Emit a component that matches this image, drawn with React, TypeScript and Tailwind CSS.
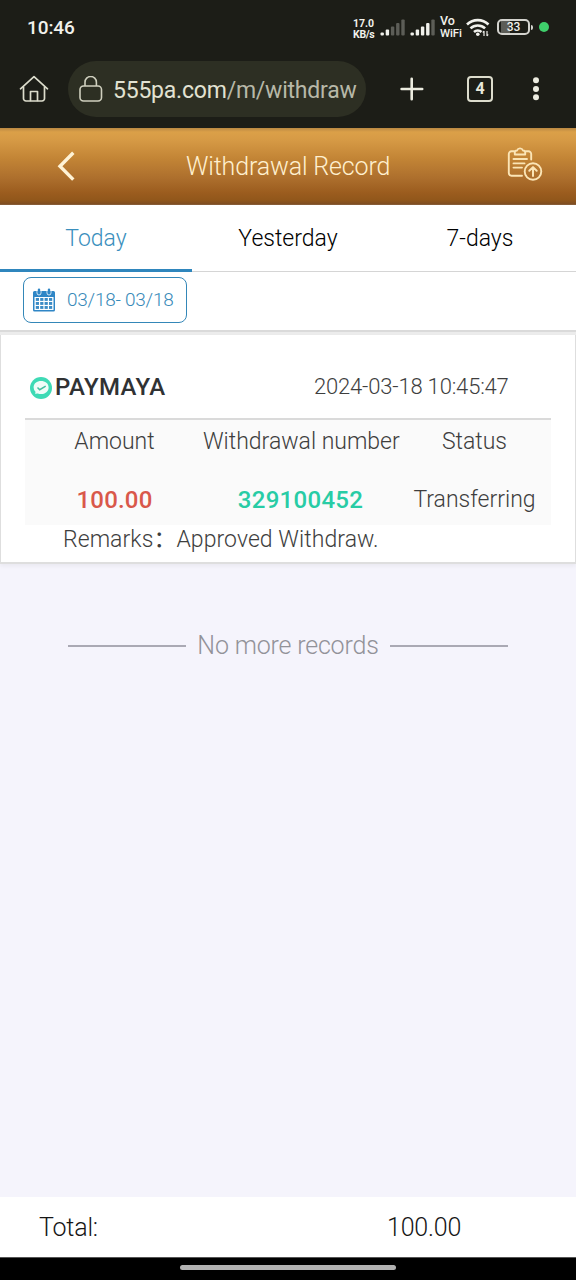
import React from "react";

function Signal({ lit }: { lit: number }) {
  const heights = [3, 6, 9, 12.5, 16];
  return (
    <svg width="26" height="17" viewBox="0 0 26 17" className="shrink-0">
      {heights.map((h, i) => (
        <rect key={i} x={0.5 + i * 5.2} y={16.5 - h} width="3.4" height={h} rx="1" fill={i < lit ? "#f1f1ec" : "#5c5d57"} />
      ))}
    </svg>
  );
}

function StatusBar() {
  return (
    <div className="flex h-[50px] items-start pl-[27px] text-[#f1f1ec]">
      <span className="mt-[16px] w-[326px] text-[19px] leading-6 font-medium tracking-[-0.1px]">10:46</span>
      <div className="mt-[18px] w-[27px] text-[10.5px] leading-[11px] font-bold whitespace-nowrap">
        <div>17.0</div>
        <div className="tracking-[-0.3px]">KB/s</div>
      </div>
      <div className="mt-[19px] flex h-[17px]">
        <Signal lit={2} />
        <div className="w-[4px]" />
        <Signal lit={4} />
      </div>
      <div className="mt-[15px] ml-[4px] w-[26px] text-[11.5px] leading-[12px] font-medium whitespace-nowrap">
        <div className="text-[12.5px]">Vo</div>
        <div className="tracking-[-0.1px]">WiFi</div>
      </div>
      <svg width="24" height="19" viewBox="0 0 24 19" className="mt-[18px] shrink-0" fill="none" stroke="#f1f1ec" strokeWidth="2.6">
        <path d="M1 6.5a15.5 15.5 0 0 1 21.5 0" />
        <path d="M4.5 10.4a10.6 10.6 0 0 1 14.6 0" />
        <path d="M8 14a5.6 5.6 0 0 1 7.5 0" />
        <circle cx="11.8" cy="16.2" r="1.8" fill="#f1f1ec" stroke="none" />
        <path d="M18 18v-5M16.8 14.5 18 13M21 13v5M22.2 16.5 21 18" strokeWidth="1.2" />
      </svg>
      <div className="mt-[19px] ml-[7px] flex items-center">
        <div className="flex h-[16px] w-[33px] items-center justify-center rounded-[5px] border-2 border-[#d3d3ce] bg-[linear-gradient(90deg,transparent_2px,#5c5d57_2px,#5c5d57_11px,transparent_11px)] text-[12px] leading-3 font-medium">33</div>
        <div className="ml-[1px] h-[5px] w-[2px] rounded-r bg-[#d3d3ce]" />
      </div>
      <div className="mt-[22px] ml-[6px] h-[10px] w-[10px] rounded-full bg-[#3fcf6b]" />
    </div>
  );
}

function BrowserBar() {
  return (
    <div className="flex h-[78px] items-start pl-[19px]">
      <svg width="30" height="28" viewBox="0 0 30 28" className="mt-[25px] shrink-0" fill="none" stroke="#dcdccc" strokeWidth="1.7" strokeLinejoin="round" strokeLinecap="round">
        <path d="M1.5 13.8 15 1.6 28.5 13.8" />
        <path d="M4.5 12v11.5a2.5 2.5 0 0 0 2.5 2.5h16a2.5 2.5 0 0 0 2.5-2.5V12" />
        <path d="M11.5 25.5v-9h7v9" />
      </svg>
      <div className="mt-[11px] ml-[19px] flex h-[56px] w-[298px] items-center rounded-full bg-[#2d2f23] pl-[11px]">
        <svg width="24" height="26" viewBox="0 0 24 26" className="shrink-0" fill="none" stroke="#cfcfbe" strokeWidth="1.6">
          <rect x="1" y="10" width="21.5" height="15" rx="3.5" />
          <path d="M6 10V6.2a5.6 5.6 0 0 1 11.4 0V10" />
        </svg>
        <div className="mt-[3px] ml-[10px] w-[246px] text-[23px] leading-8 tracking-[-0.22px] whitespace-nowrap text-[#e2e2d2]">
          <span>555pa.com</span>
          <span className="text-[#b7b8a8]">/m/withdraw</span>
        </div>
      </div>
      <svg width="24" height="24" viewBox="0 0 24 24" className="mt-[27px] ml-[34px] shrink-0" fill="none" stroke="#ecece0" strokeWidth="2.6" strokeLinecap="round">
        <path d="M11.7 1.7v20.6M1.6 12h20.6" />
      </svg>
      <div className="mt-[26px] ml-[43px] flex h-[26px] w-[26px] items-center justify-center rounded-[4px] border-2 border-[#dcdccc] text-[16px] font-bold text-[#e8e8da]">4</div>
      <svg width="8" height="26" viewBox="0 0 8 26" className="mt-[26px] ml-[39px] shrink-0" fill="#ecece0">
        <circle cx="4" cy="4.3" r="3" />
        <circle cx="4" cy="12.9" r="3" />
        <circle cx="4" cy="21.3" r="3" />
      </svg>
    </div>
  );
}

function Header() {
  return (
    <div className="flex h-[77px] items-start bg-[linear-gradient(180deg,#b98843_0px,#dba048_4px,#d69a45_12px,#c38536_30px,#ad6f2d_50px,#9b5c1e_65px,#91571b_72px,#7e4d22_76px,#8f6a4a_77px)]">
      <svg width="20" height="32" viewBox="0 0 20 32" className="mt-[22px] ml-[57px] shrink-0" fill="none" stroke="#fff3d6" strokeWidth="3.4">
        <path d="M16.3 2.8 3 16.2l13.3 13.4" />
      </svg>
      <div className="mt-[23px] ml-[109px] w-[204px] text-[25px] leading-8 font-light tracking-[-0.15px] whitespace-nowrap text-[#fff0cf]">Withdrawal Record</div>
      <svg width="36" height="36" viewBox="0 0 36 36" className="mt-[18px] ml-[117px] shrink-0" fill="none" stroke="#fbe5b6" strokeWidth="1.9" strokeLinecap="round" strokeLinejoin="round">
        <path d="M7 5.3H4.500a2.700 2.700 0 0 0-2.700 2.700v19a2.700 2.700 0 0 0 2.700 2.700H15" />
        <path d="M19 5.300h2.500a2.700 2.700 0 0 1 2.700 2.700v5.500" />
        <path d="M7.800 8.500V6.200q0-1.500 2.200-1.700a3.200 3.200 0 0 1 6 0q2.200.2 2.200 1.700v2.300z" />
        <path d="M6.500 13h13.500M6.500 17.400h11M6.500 21.600h8.500" />
        <circle cx="26" cy="25.500" r="8.300" />
        <path d="M26 30v-8.500M22.300 24.800 26 21.100l3.700 3.700" strokeWidth="2" />
      </svg>
    </div>
  );
}

function Tabs() {
  return (
    <div className="grid h-[67px] grid-cols-3 text-center text-[23px] leading-8 font-light text-black">
      <div className="border-b-[3px] border-[#2f86bd] pt-[18px] text-[#3b8fbd]">Today</div>
      <div className="border-b border-[#d5d5d5] pt-[18px]">Yesterday</div>
      <div className="border-b border-[#d5d5d5] pt-[18px]">7-days</div>
    </div>
  );
}

function CalendarIcon() {
  const cells = [0, 1, 2, 3];
  return (
    <svg width="22" height="24" viewBox="0 0 22 24" className="shrink-0">
      <path d="M1.500 3h19a1.500 1.500 0 0 1 1.500 1.500V22a1.500 1.500 0 0 1-1.500 1.500h-19A1.500 1.500 0 0 1 0 22V4.500A1.500 1.500 0 0 1 1.500 3z" fill="#2f86c6" />
      <path d="M4 2.500v2.500a2 2 0 0 0 4 0v-2.500M14 2.500v2.500a2 2 0 0 0 4 0v-2.500" fill="none" stroke="#fff" strokeWidth=".8" />
      <rect x="4.800" y=".5" width="2.400" height="5.500" rx="1.200" fill="#2f86c6" />
      <rect x="14.800" y=".5" width="2.400" height="5.500" rx="1.200" fill="#2f86c6" />
      <rect x="1.500" y="9" width="19" height="13" fill="#fff" />
      {[0, 1, 2].map((r) =>
        cells.map((c) => <rect key={`${r}-${c}`} x={2.8 + c * 4.4} y={10 + r * 4} width="3.200" height="2.900" fill="#3c8cc6" />)
      )}
    </svg>
  );
}

function RecordCard() {
  return (
    <div className="h-[229px] border-x border-b-2 border-[#dedede] bg-white px-[24px] pt-[36px] text-[#3e3e3e] shadow-[0_2px_4px_rgba(0,0,0,0.05)]">
      <div className="flex h-[49px] items-start border-b-2 border-[#dadada] pl-[4px]">
        <svg width="24" height="24" viewBox="0 0 24 24" className="mt-[5px] shrink-0">
          <circle cx="12" cy="12" r="11" fill="#3edab5" />
          <path d="M12 5c4.200 0 7.600 2.400 7.600 6.400s-3.400 6.600-7.600 6.600q-1.700 0-3.200-.6l-2.800.4.600-1.900Q4.600 13.800 4.600 11.400C4.600 7.400 8 5 12 5z" fill="#f0fcf8" />
          <path d="m8.500 11.500 2.200 2.200 6-3.500" fill="none" stroke="#45bea0" strokeWidth="1.500" />
        </svg>
        <div className="ml-[2px] w-[259px] text-[24px] leading-8 font-medium tracking-[0.4px] text-[#303234]">PAYMAYA</div>
        <div className="text-[22px] leading-8 font-light tracking-[-0.18px] whitespace-nowrap">2024-03-18 10:45:47</div>
      </div>
      <div className="grid h-[105px] grid-cols-[179px_193px_154px] grid-rows-[46px_59px] bg-[#fafafa] text-center text-[23px] leading-8 font-light whitespace-nowrap">
        <div className="pt-[6px]">Amount</div>
        <div className="-ml-[1px] pt-[6px]">Withdrawal number</div>
        <div className="pt-[6px] pl-[1px]">Status</div>
        <div className="pt-[18px] text-[24px] font-medium tracking-[0.2px] text-[#d9584a]">100.00</div>
        <div className="pt-[18px] text-[24px] font-medium tracking-[0.3px] text-[#28cca5]">329100452</div>
        <div className="pt-[18px] pl-[1px]">Transferring</div>
      </div>
      <div className="-mt-px flex pl-[38px] text-[23px] leading-8 font-light tracking-[0.07px] whitespace-nowrap">
        <span>Remarks</span>
        <span className="-mt-[3px] w-[23px] font-['Noto_Sans_CJK_SC',sans-serif] font-normal">：</span>
        <span>Approved Withdraw.</span>
      </div>
    </div>
  );
}

export default function App() {
  return (
    <div className="flex h-[1280px] w-[576px] flex-col overflow-hidden bg-[#f5f4fc] font-['Roboto','Liberation_Sans',sans-serif]">
      <div className="h-[128px] bg-[#1c1d17]">
        <StatusBar />
        <BrowserBar />
      </div>
      <Header />
      <div className="h-[127px] border-b-2 border-[#dadada] bg-white">
        <Tabs />
        <div className="mt-[5px] ml-[23px] flex h-[46px] w-[164px] items-center rounded-[8px] border-[1.5px] border-[#3487b8] pl-[9px]">
          <CalendarIcon />
          <span className="ml-[12px] text-[19px] leading-6 font-light tracking-[-0.25px] whitespace-nowrap text-[#3789b8]">03/18- 03/18</span>
        </div>
      </div>
      <div className="h-[3px] bg-[#ececec]" />
      <RecordCard />
      <div className="mt-[64px] flex items-center justify-center text-[25px] leading-9 font-light text-[#929299]">
        <div className="h-[2px] w-[118px] bg-[#aaa9b4]" />
        <span className="w-[204px] text-center tracking-[-0.18px] whitespace-nowrap">No more records</span>
        <div className="h-[2px] w-[118px] bg-[#aaa9b4]" />
      </div>
      <div className="mt-auto flex h-[60px] bg-white pt-[15px] pl-[39px] text-[25px] leading-8 font-light tracking-[-0.2px] text-[#161616]">
        <span className="w-[348px]">Total:</span>
        <span>100.00</span>
      </div>
      <div className="flex h-[23px] shrink-0 justify-center border-t border-[#555] bg-black pt-[7px]">
        <div className="h-[5px] w-[216px] rounded-full bg-[#b1b1b1]" />
      </div>
    </div>
  );
}
